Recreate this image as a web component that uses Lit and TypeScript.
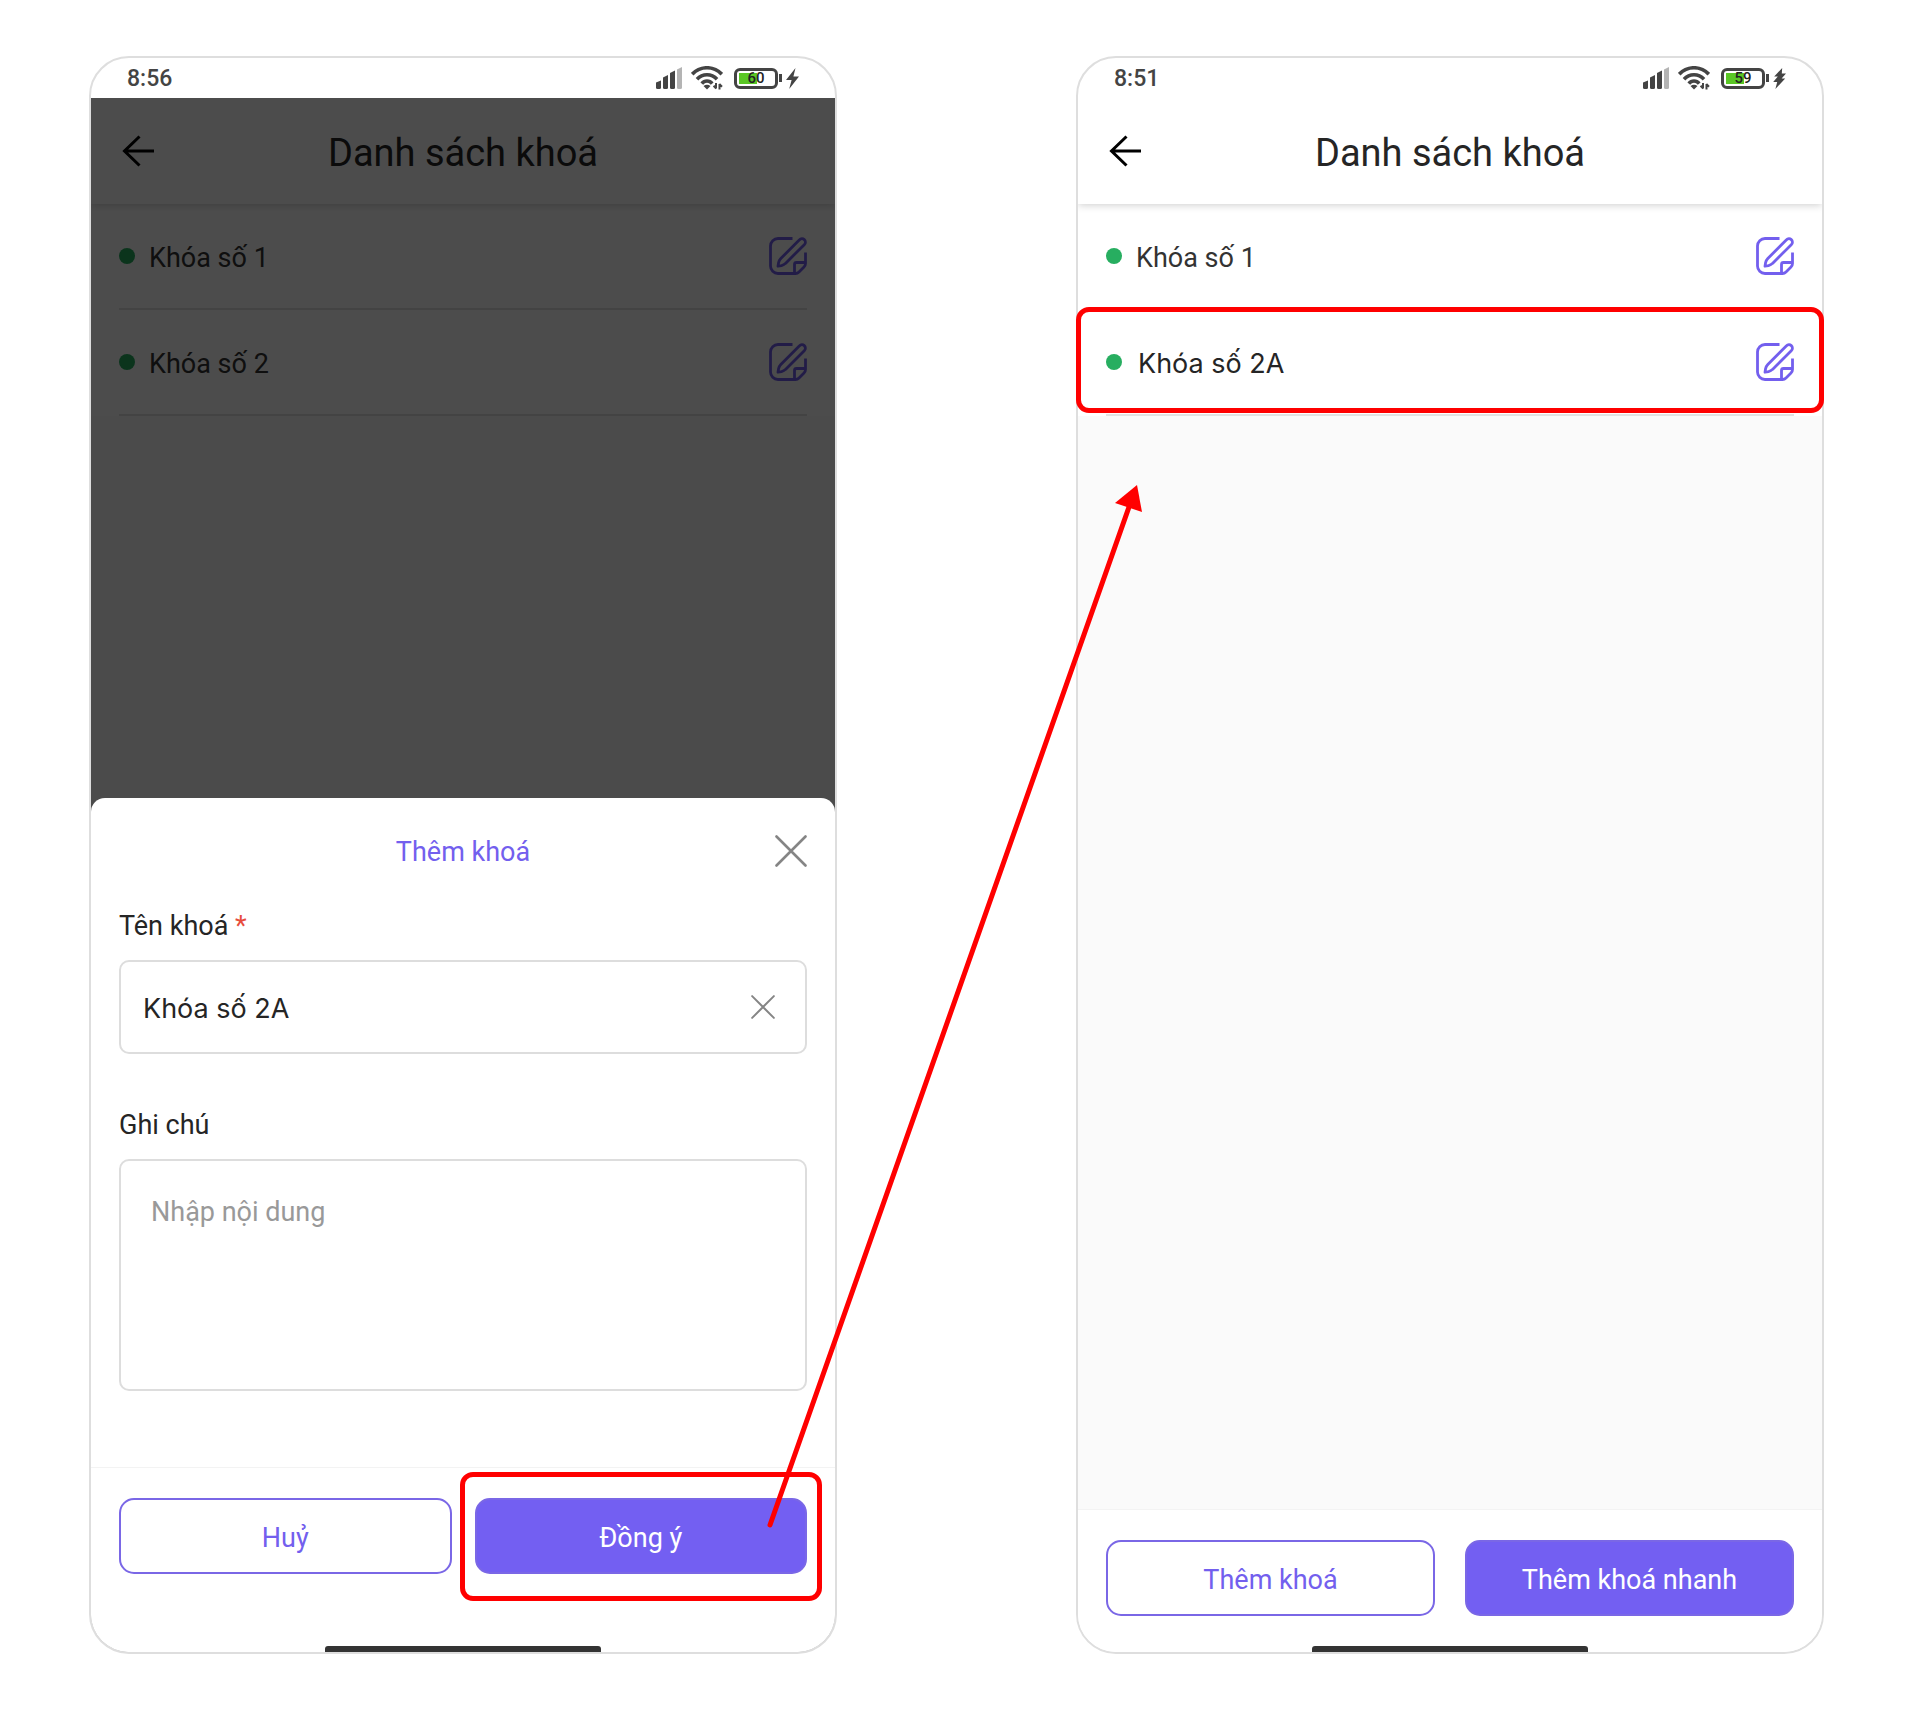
import { LitElement, html, css, svg, nothing } from "lit";
import { customElement, property } from "lit/decorators.js";

interface LockItem {
  name: string;
  edited?: boolean;
}

const base = css`
  *,
  *::before,
  *::after {
    box-sizing: border-box;
  }
  button {
    font: inherit;
    cursor: pointer;
  }
  svg {
    display: block;
  }
`;

const signalIcon = svg`
  <svg width="27" height="22" viewBox="0 0 27 22" aria-hidden="true">
    <path d="M0 15.500L5 13.500V20.500Q5 22 3.500 22H1.500Q0 22 0 20.500Z" fill="#444" />
    <path d="M7 10.500L12 8V20.500Q12 22 10.500 22H8.500Q7 22 7 20.500Z" fill="#444" />
    <path d="M14 6L19 3.500V20.500Q19 22 17.500 22H15.500Q14 22 14 20.500Z" fill="#444" />
    <path d="M21 2.500L26 0V20.500Q26 22 24.500 22H22.500Q21 22 21 20.500Z" fill="#b4b4b4" />
  </svg>`;

const wifiIcon = svg`
  <svg width="32" height="24" viewBox="0 0 32 24" fill="none" stroke="#444" stroke-width="3.6" aria-hidden="true">
    <path d="M1.200 8.200C9.500 -.400 22.500 -.400 30.800 8.200" />
    <path d="M6 13.200C11.500 7.200 20.500 7.200 26 13.200" />
    <path d="M10.800 17.600C13.600 14.200 18.400 14.200 21.200 17.600" />
    <path d="M12.500 20Q16 17.400 19.500 20L16 23.600Z" fill="#444" stroke="none" />
    <path d="M25 17v5.500M25.200 22.500l-2.600-2.800M28.500 23.500v-5.500M28.300 18l2.700 2.800" stroke-width="2" />
  </svg>`;

const boltIcon = svg`
  <svg width="13" height="21" viewBox="0 0 13 21" aria-hidden="true">
    <path d="M9.500 0L0 12h5.600L3.200 21L13 8.500H7.400Z" fill="#444" />
  </svg>`;

const doubleBoltIcon = svg`
  <svg width="13" height="21" viewBox="0 0 13 21" aria-hidden="true">
    <path d="M9.200 0L1.200 8.400h3.600L.200 14h4L2.400 21l9.800-10.400H8.600L13 5.400H8.800Z" fill="#444" />
  </svg>`;

const backIcon = svg`
  <svg width="32" height="32" viewBox="0 0 32 32" fill="none" stroke="#000" stroke-width="3" aria-hidden="true">
    <path d="M32 16H2.500M17.500 1.500L2.500 16L17.500 30.500" />
  </svg>`;

const editIcon = svg`
  <svg width="38" height="38" viewBox="0 0 38 38" fill="none" stroke="#735fee" stroke-width="2.800" stroke-linejoin="round" aria-hidden="true">
    <path d="M23.500 1.500H9A7.500 7.500 0 0 0 1.500 9V29A7.500 7.500 0 0 0 9 36.500H26.500Q28.500 36.500 30 35L35 30Q36.500 28.500 36.500 26.500V15.500" />
    <path d="M25.500 36.500V27.500Q25.500 25.500 27.500 25.500H36.500" />
    <path d="M30.500 2.800A3.200 3.200 0 0 1 35.500 7.400L16.500 26.400Q15 28 12.500 28.600L9 29.200L9.600 25.600Q10.200 23.200 11.800 21.500Z" />
  </svg>`;

const crossIcon = (size: number, weight: number) => svg`
  <svg width=${size} height=${size} viewBox="0 0 32 32" fill="none" stroke="#858585" stroke-width=${weight} stroke-linecap="round" aria-hidden="true">
    <path d="M1.500 1.500L30.500 30.500M30.500 1.500L1.500 30.500" />
  </svg>`;

@customElement("status-bar")
export class StatusBar extends LitElement {
  @property() time = "";
  @property({ type: Number }) battery = 0;
  @property({ type: Boolean }) fast = false;

  static styles = [
    base,
    css`
      :host {
        display: flex;
        align-items: center;
        justify-content: space-between;
        height: 40px;
        padding: 0 36px;
        color: #444;
        font-size: 23px;
        font-weight: 500;
      }
      .icons {
        display: flex;
        align-items: center;
      }
      .wifi {
        margin: 0 11px 0 8px;
      }
      .battery {
        position: relative;
        display: grid;
        place-items: center;
        width: 44px;
        height: 21px;
        border: 3px solid #444;
        border-radius: 6px;
        color: #222;
        font-size: 15px;
        line-height: 15px;
      }
      .charge {
        position: absolute;
        left: 2px;
        top: 2px;
        bottom: 2px;
        background: #5ac725;
      }
      .level {
        position: relative;
      }
      .nub {
        width: 3px;
        height: 8px;
        margin: 0 4px 0 1px;
        background: #444;
      }
    `,
  ];

  render() {
    return html`
      <span>${this.time}</span>
      <div class="icons">
        ${signalIcon}
        <span class="wifi">${wifiIcon}</span>
        <div class="battery">
          <span class="charge" style="width:${Math.round(this.battery * 0.3)}px"></span>
          <span class="level">${this.battery}</span>
        </div>
        <span class="nub"></span>
        ${this.fast ? doubleBoltIcon : boltIcon}
      </div>
    `;
  }
}

@customElement("lock-screen")
export class LockScreen extends LitElement {
  @property({ attribute: false }) locks: LockItem[] = [];

  static styles = [
    base,
    css`
      :host {
        display: flex;
        flex-direction: column;
        flex: 1;
      }
      header {
        position: relative;
        z-index: 1;
        display: grid;
        grid-template-columns: 32px 1fr 32px;
        align-items: center;
        height: 106px;
        padding: 0 31px;
        background: #fff;
        box-shadow: 0 1px 8px rgba(0, 0, 0, 0.2);
        clip-path: inset(0 0 -12px 0);
      }
      h1 {
        margin: 0;
        padding-top: 4px;
        color: #252525;
        font-size: 38px;
        font-weight: 400;
        line-height: 44px;
        text-align: center;
      }
      .icon {
        padding: 0;
        border: 0;
        background: none;
      }
      ul {
        flex: 1;
        margin: 0;
        padding: 0;
        list-style: none;
        background: #fafafa;
      }
      li {
        position: relative;
        padding: 0 28px;
        background: #fff;
      }
      .row {
        display: flex;
        align-items: center;
        height: 106px;
        border-bottom: 2px solid #e2e2e2;
      }
      .dot {
        width: 16px;
        height: 16px;
        margin-right: 14px;
        border-radius: 50%;
        background: #27ae60;
      }
      .name {
        flex: 1;
        padding-top: 4px;
        color: #333;
        font-size: 27px;
        line-height: 32px;
      }
      .edited .name {
        padding-left: 2px;
        color: #252525;
        font-family: Inter, "Noto Sans", sans-serif;
      }
      .mark {
        position: absolute;
        inset: -3px -2px 3px -2px;
        z-index: 2;
        border: 5px solid #f00;
        border-radius: 13px;
        pointer-events: none;
      }
    `,
  ];

  render() {
    return html`
      <header>
        <button class="icon" aria-label="Quay lại">${backIcon}</button>
        <h1>Danh sách khoá</h1>
      </header>
      <ul>
        ${this.locks.map(
          (lock) => html`
            <li class=${lock.edited ? "edited" : ""}>
              <div class="row">
                <span class="dot"></span>
                <span class="name">${lock.name}</span>
                <button class="icon" aria-label="Sửa">${editIcon}</button>
              </div>
              ${lock.edited ? html`<span class="mark"></span>` : nothing}
            </li>
          `
        )}
      </ul>
    `;
  }
}

@customElement("action-bar")
export class ActionBar extends LitElement {
  @property() secondary = "";
  @property() primary = "";
  @property({ type: Boolean, reflect: true }) sheet = false;

  static styles = [
    base,
    css`
      :host {
        display: block;
        border-top: 1px solid #f3f3f3;
        border-radius: 0 0 38px 38px;
        background: #fff;
      }
      .actions {
        display: flex;
        gap: 30px;
        padding: 30px 28px;
      }
      :host([sheet]) .actions {
        gap: 23px;
        padding-bottom: 72px;
      }
      .slot {
        position: relative;
        display: flex;
        flex: 1;
      }
      .button {
        flex: 1;
        height: 76px;
        padding: 4px 0 0;
        border: 2px solid #7a67e6;
        border-radius: 15px;
        background: #fff;
        color: #735fee;
        font-size: 27px;
        line-height: 32px;
      }
      .primary {
        background: #735ff2;
        color: #fff;
      }
      .mark {
        position: absolute;
        inset: -26px -15px -27px -15px;
        border: 5px solid #f00;
        border-radius: 13px;
        pointer-events: none;
      }
      .home {
        width: 276px;
        height: 6px;
        margin: 0 auto;
        border-radius: 3px 3px 0 0;
        background: #333;
      }
    `,
  ];

  render() {
    return html`
      <div class="actions">
        <div class="slot"><button class="button">${this.secondary}</button></div>
        <div class="slot">
          <button class="button primary">${this.primary}</button>
          ${this.sheet ? html`<span class="mark"></span>` : nothing}
        </div>
      </div>
      <div class="home"></div>
    `;
  }
}

@customElement("lock-form")
export class LockForm extends LitElement {
  static styles = [
    base,
    css`
      :host {
        display: block;
        border-radius: 14px 14px 38px 38px;
        background: #fff;
      }
      form {
        display: flex;
        flex-direction: column;
        padding: 30px 28px 76px;
        color: #252525;
        font-size: 27px;
        line-height: 32px;
      }
      .heading {
        display: grid;
        grid-template-columns: 32px 1fr 32px;
        align-items: center;
        height: 46px;
        margin-bottom: 36px;
      }
      h2 {
        grid-column: 2;
        margin: 0;
        padding-top: 2px;
        color: #735fee;
        font-size: 27px;
        font-weight: 400;
        text-align: center;
      }
      .icon {
        padding: 0;
        border: 0;
        background: none;
      }
      label {
        margin-bottom: 18px;
      }
      .required {
        color: #e74c3c;
      }
      .field {
        display: flex;
        align-items: center;
        height: 94px;
        margin-bottom: 55px;
        padding: 0 30px 0 22px;
        border: 2px solid #ddd;
        border-radius: 10px;
      }
      input {
        flex: 1;
        min-width: 0;
        padding: 4px 0 0;
        border: 0;
        outline: 0;
        background: none;
        color: #252525;
        font: 27px/32px Inter, "Noto Sans", sans-serif;
      }
      textarea {
        display: block;
        width: 100%;
        height: 232px;
        padding: 35px 30px;
        border: 2px solid #ddd;
        border-radius: 10px;
        outline: 0;
        resize: none;
        background: #fff;
        color: #252525;
        font: inherit;
      }
      textarea::placeholder {
        color: #999;
        opacity: 1;
      }
    `,
  ];

  render() {
    return html`
      <form>
        <div class="heading">
          <h2>Thêm khoá</h2>
          <button type="button" class="icon" aria-label="Đóng">${crossIcon(32, 2.6)}</button>
        </div>
        <label for="name">Tên khoá <span class="required">*</span></label>
        <div class="field">
          <input id="name" type="text" value="Khóa số 2A" />
          <button type="button" class="icon" aria-label="Xoá">${crossIcon(24, 2.6)}</button>
        </div>
        <label for="note">Ghi chú</label>
        <textarea id="note" placeholder="Nhập nội dung"></textarea>
      </form>
      <action-bar sheet secondary="Huỷ" primary="Đồng ý"></action-bar>
    `;
  }
}

@customElement("app-root")
export class AppRoot extends LitElement {
  private before: LockItem[] = [{ name: "Khóa số 1" }, { name: "Khóa số 2" }];
  private after: LockItem[] = [{ name: "Khóa số 1" }, { name: "Khóa số 2A", edited: true }];

  static styles = [
    base,
    css`
      :host {
        display: block;
        background: #fff;
        font-family: Roboto, "Noto Sans", sans-serif;
      }
      .page {
        position: relative;
        display: grid;
        grid-template-columns: 1fr 1fr;
        gap: 239px;
        min-height: 100vh;
        padding: 56px 96px 55px 89px;
      }
      .phone {
        display: flex;
        flex-direction: column;
        min-width: 0;
        border: 2px solid #dedede;
        border-radius: 40px;
        background: #fff;
      }
      .screen {
        position: relative;
        display: flex;
        flex: 1;
        flex-direction: column;
      }
      .dim {
        position: absolute;
        inset: 0;
        z-index: 3;
        display: flex;
        flex-direction: column;
        justify-content: flex-end;
        border-radius: 0 0 38px 38px;
        background: rgba(0, 0, 0, 0.7);
      }
      .list {
        border-radius: 0 0 38px 38px;
        overflow: hidden;
      }
      .arrow {
        position: absolute;
        inset: 0;
        z-index: 4;
        width: 100%;
        height: 100%;
        pointer-events: none;
      }
    `,
  ];

  render() {
    return html`
      <main class="page">
        <section class="phone">
          <status-bar time="8:56" battery="60"></status-bar>
          <div class="screen">
            <lock-screen class="list" .locks=${this.before}></lock-screen>
            <div class="dim"><lock-form></lock-form></div>
          </div>
        </section>
        <section class="phone">
          <status-bar time="8:51" battery="59" fast></status-bar>
          <lock-screen .locks=${this.after}></lock-screen>
          <action-bar secondary="Thêm khoá" primary="Thêm khoá nhanh"></action-bar>
        </section>
        <svg class="arrow" viewBox="0 0 1920 1709" preserveAspectRatio="none" aria-hidden="true">
          <path d="M770 1525L1129 507" stroke="#f00" stroke-width="5" stroke-linecap="round" />
          <path d="M1137 485L1142 512L1115 503Z" fill="#f00" />
        </svg>
      </main>
    `;
  }
}
